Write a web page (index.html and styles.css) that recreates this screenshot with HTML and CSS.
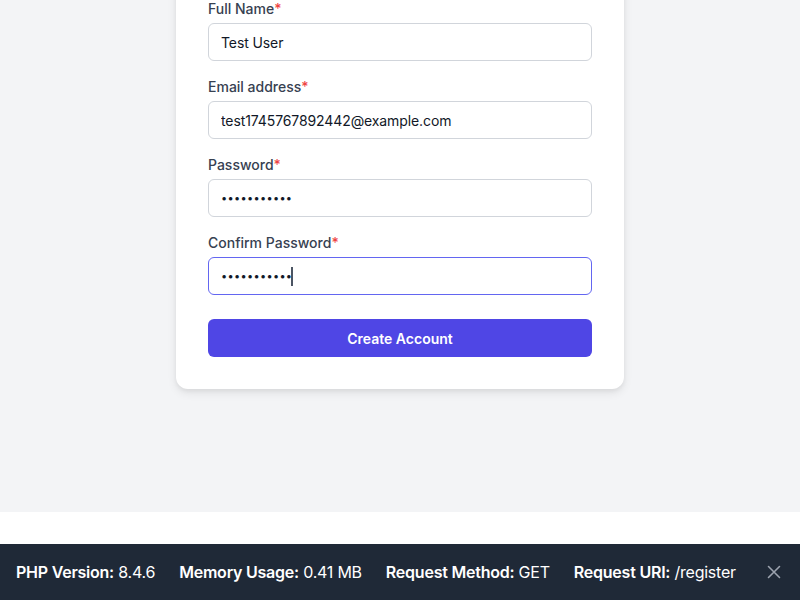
FILE: index.html
```html
<!DOCTYPE html>
<html lang="en">
<head>
<meta charset="utf-8">
<title>Register</title>
<link rel="stylesheet" href="styles.css">
</head>
<body>
<main class="main">
  <form class="card">
    <div class="field">
      <label class="label">Full Name<span class="req">*</span></label>
      <input class="input" type="text" value="Test User">
    </div>
    <div class="field">
      <label class="label">Email address<span class="req">*</span></label>
      <input class="input" type="email" value="test1745767892442@example.com">
    </div>
    <div class="field">
      <label class="label">Password<span class="req">*</span></label>
      <input class="input pw" type="password" value="password123">
    </div>
    <div class="field">
      <label class="label">Confirm Password<span class="req">*</span></label>
      <div class="input-wrap">
        <input class="input pw input-focus" type="password" value="password123">
        <span class="caret"></span>
      </div>
    </div>
    <button class="btn" type="button">Create Account</button>
  </form>
</main>
<div class="spacer"></div>
<footer class="debug">
  <div class="items">
    <span><b>PHP Version:</b> 8.4.6</span>
    <span><b>Memory Usage:</b> 0.41 MB</span>
    <span><b>Request Method:</b> GET</span>
    <span><b>Request URI:</b> /register</span>
  </div>
  <span class="close">
    <svg width="14" height="14" viewBox="0 0 14 14"><path d="M1.5 1.5L12.5 12.5M12.5 1.5L1.5 12.5" stroke="#9ca3af" stroke-width="1.6" stroke-linecap="round" fill="none"/></svg>
  </span>
</footer>
</body>
</html>
```
FILE: styles.css
```css
* { box-sizing: border-box; }
html, body { margin: 0; padding: 0; }
body {
  font-family: Inter, "Noto Sans", "Liberation Sans", sans-serif;
  background: #ffffff;
  overflow: hidden;
  height: 600px;
}
.main {
  background: #f3f4f6;
  height: 512px;
  display: flex;
  justify-content: center;
  align-items: flex-start;
  overflow: hidden;
}
.card {
  width: 448px;
  margin-top: -33px;
  background: #ffffff;
  border-radius: 12px;
  box-shadow: 0 4px 10px rgba(0,0,0,0.08), 0 2px 4px rgba(0,0,0,0.05);
  padding: 32px;
  display: flex;
  flex-direction: column;
  gap: 16px;
}
.field { display: flex; flex-direction: column; gap: 4px; }
.label {
  font-size: 14px;
  line-height: 20px;
  font-weight: 500;
  color: #374151;
}
.req { color: #ef4444; }
.input {
  height: 38px;
  width: 100%;
  border: 1px solid #d1d5db;
  border-radius: 6px;
  padding: 0 12px;
  font-family: inherit;
  font-size: 14px;
  letter-spacing: -0.1px;
  color: #111827;
  background: #fff;
  outline: none;
}
.pw { font-size: 11px; letter-spacing: 0.3px; }
.input-focus { border-color: #6366f1; }
.input-wrap { position: relative; }
.caret {
  position: absolute;
  left: 83px;
  top: 10px;
  width: 1.5px;
  height: 19px;
  background: #4b5563;
}
.btn {
  margin-top: 8px;
  height: 38px;
  width: 100%;
  border: none;
  border-radius: 6px;
  background: #4f46e5;
  color: #ffffff;
  font-family: inherit;
  font-size: 14px;
  font-weight: 600;
}
.spacer { height: 32px; background: #fff; }
.debug {
  height: 56px;
  background: #1f2937;
  color: #ffffff;
  display: flex;
  align-items: center;
  justify-content: space-between;
  padding: 0 19px 0 16px;
  font-size: 16px;
  letter-spacing: -0.23px;
}
.items { display: flex; gap: 24px; }
.items b { font-weight: 600; }
.close { display: flex; align-items: center; }
```
